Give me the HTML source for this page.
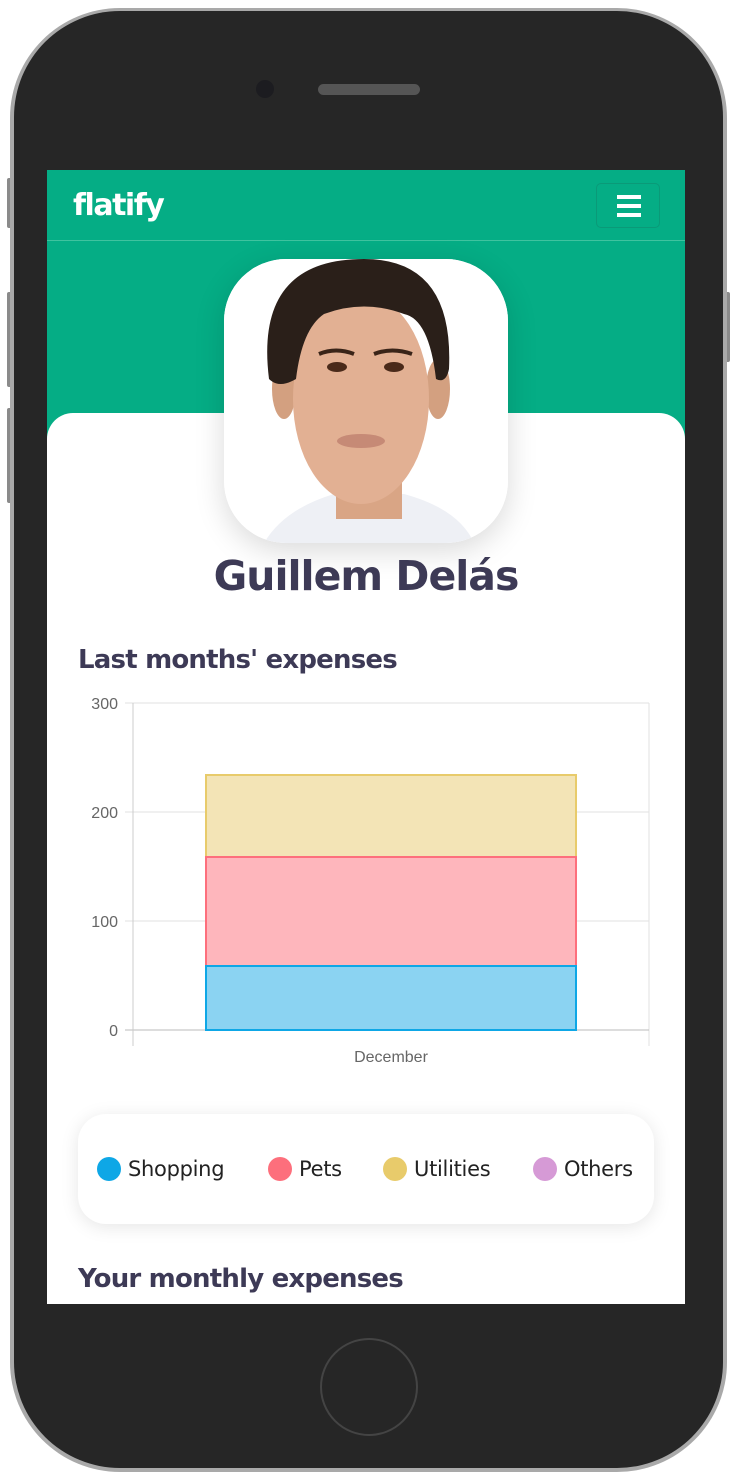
<!DOCTYPE html>
<html><head><meta charset="utf-8"><style>
*{margin:0;padding:0;box-sizing:border-box}
body{width:736px;height:1479px;background:#fff;position:relative;overflow:hidden;font-family:"Liberation Sans",sans-serif}
.phone{position:absolute;left:10px;top:8px;width:717px;height:1464px;border-radius:110px;background:#a9a9a9}
.phone2{position:absolute;left:14px;top:11px;width:709px;height:1457px;border-radius:106px;background:#262626}
.btn{position:absolute;background:#8a8a8a;width:6px;border-radius:2px}
.screen{position:absolute;left:47px;top:170px;width:638px;height:1134px;background:#fff;overflow:hidden}
.nav{position:absolute;left:0;top:0;width:638px;height:280px;background:#05ad85}
.navline{position:absolute;left:0;top:70px;width:638px;height:1px;background:#3fc39f}
.logo{position:absolute;left:26px;top:18px;color:#fff;font-size:30px;font-weight:bold;font-family:"DejaVu Sans",sans-serif;letter-spacing:-1.5px}
.burger{position:absolute;left:549px;top:13px;width:64px;height:45px;border:1px solid #0a9a78;border-radius:5px}
.burger i{position:absolute;left:20px;width:24px;height:4px;background:#fff}
.card{position:absolute;left:0;top:243px;width:638px;height:900px;background:#fff;border-radius:26px 26px 0 0}
.avatar{position:absolute;left:177px;top:89px;width:284px;height:284px;border-radius:62px;background:#fff;overflow:hidden;box-shadow:0 8px 30px rgba(0,0,0,.15)}
.name{position:absolute;left:0;width:638px;top:382px;text-align:center;font-size:41px;font-weight:bold;color:#3d3a56;font-family:"DejaVu Sans",sans-serif;letter-spacing:-1px}
h2{position:absolute;left:31px;font-size:26px;font-weight:bold;color:#3d3a56;font-family:"DejaVu Sans",sans-serif;letter-spacing:-0.8px}
.legend{position:absolute;left:31px;top:944px;width:576px;height:110px;border-radius:28px;background:#fff;box-shadow:0 3px 18px rgba(0,0,0,.1)}
.li{position:absolute;top:42px;font-size:21px;color:#222;font-family:"DejaVu Sans",sans-serif;line-height:26px;letter-spacing:-0.3px}
.li b{position:absolute;left:-31px;top:1px;width:24px;height:24px;border-radius:50%}
</style></head><body>
<div class="btn" style="left:7px;top:178px;height:50px"></div>
<div class="btn" style="left:7px;top:292px;height:95px"></div>
<div class="btn" style="left:7px;top:408px;height:95px"></div>
<div class="btn" style="left:724px;top:292px;height:70px"></div>
<div class="phone"></div><div class="phone2"></div>
<div style="position:absolute;left:256px;top:80px;width:18px;height:18px;border-radius:50%;background:#1c1c20"></div>
<div style="position:absolute;left:318px;top:84px;width:102px;height:11px;border-radius:6px;background:#555"></div>
<div style="position:absolute;left:320px;top:1338px;width:98px;height:98px;border-radius:50%;border:2px solid #444"></div>
<div class="screen">
 <div class="nav"><div class="navline"></div>
  <div class="logo">flatify</div>
  <div class="burger"><i style="top:11px"></i><i style="top:20px"></i><i style="top:29px"></i></div>
 </div>
 <div class="card"></div>
 <div class="avatar">
  <svg width="284" height="284" viewBox="0 0 284 284">
   <rect width="284" height="284" fill="#fff"/>
   <path d="M40 284 Q60 250 110 235 L180 235 Q235 250 250 284Z" fill="#eef0f5"/>
   <rect x="112" y="190" width="66" height="70" fill="#d9a585"/>
   <ellipse cx="60" cy="130" rx="12" ry="30" fill="#d3a080"/>
   <ellipse cx="214" cy="130" rx="12" ry="30" fill="#d3a080"/>
   <ellipse cx="137" cy="140" rx="68" ry="105" fill="#e2b093"/>
   <path d="M45 120 Q30 0 140 0 Q230 0 225 110 Q222 125 212 120 Q205 60 180 55 Q140 40 100 55 Q78 70 72 120 Q55 130 45 120Z" fill="#2a1f19"/>
   <ellipse cx="113" cy="108" rx="10" ry="5" fill="#4a2a1a"/>
   <ellipse cx="170" cy="108" rx="10" ry="5" fill="#4a2a1a"/>
   <path d="M95 95 Q112 88 130 95 M150 95 Q168 88 188 95" stroke="#3a2418" stroke-width="4" fill="none"/>
   <ellipse cx="137" cy="182" rx="24" ry="7" fill="#c68a76"/>
  </svg>
 </div>
 <div class="name">Guillem Delás</div>
 <h2 style="top:475px">Last months' expenses</h2>
 <svg style="position:absolute;left:0;top:520px" width="638" height="380" viewBox="0 520 638 380" font-family="Liberation Sans" font-size="16" fill="#666">
  <g stroke="#e2e2e2" stroke-width="1">
   <line x1="78" y1="533" x2="602" y2="533"/><line x1="78" y1="642" x2="602" y2="642"/><line x1="78" y1="751" x2="602" y2="751"/>
   <line x1="602" y1="533" x2="602" y2="876"/>
  </g>
  <line x1="78" y1="860" x2="602" y2="860" stroke="#bbb"/>
  <line x1="86" y1="533" x2="86" y2="876" stroke="#ccc"/>
  <text x="71" y="539" text-anchor="end">300</text>
  <text x="71" y="648" text-anchor="end">200</text>
  <text x="71" y="757" text-anchor="end">100</text>
  <text x="71" y="866" text-anchor="end">0</text>
  <text x="344" y="892" text-anchor="middle">December</text>
  <rect x="159" y="605" width="370" height="82" fill="#f3e4b6" stroke="#e8cb6b" stroke-width="2"/>
  <rect x="159" y="687" width="370" height="109" fill="#feb6bc" stroke="#fd6f7c" stroke-width="2"/>
  <rect x="159" y="796" width="370" height="64" fill="#8bd3f2" stroke="#0ea7e6" stroke-width="2"/>
 </svg>
 <div class="legend">
  <div class="li" style="left:50px"><b style="background:#0ea7e6"></b>Shopping</div>
  <div class="li" style="left:221px"><b style="background:#fd6f7c"></b>Pets</div>
  <div class="li" style="left:336px"><b style="background:#e8cb6b"></b>Utilities</div>
  <div class="li" style="left:486px"><b style="background:#d69ad6"></b>Others</div>
 </div>
 <h2 style="top:1094px">Your monthly expenses</h2>
</div>
</body></html>
